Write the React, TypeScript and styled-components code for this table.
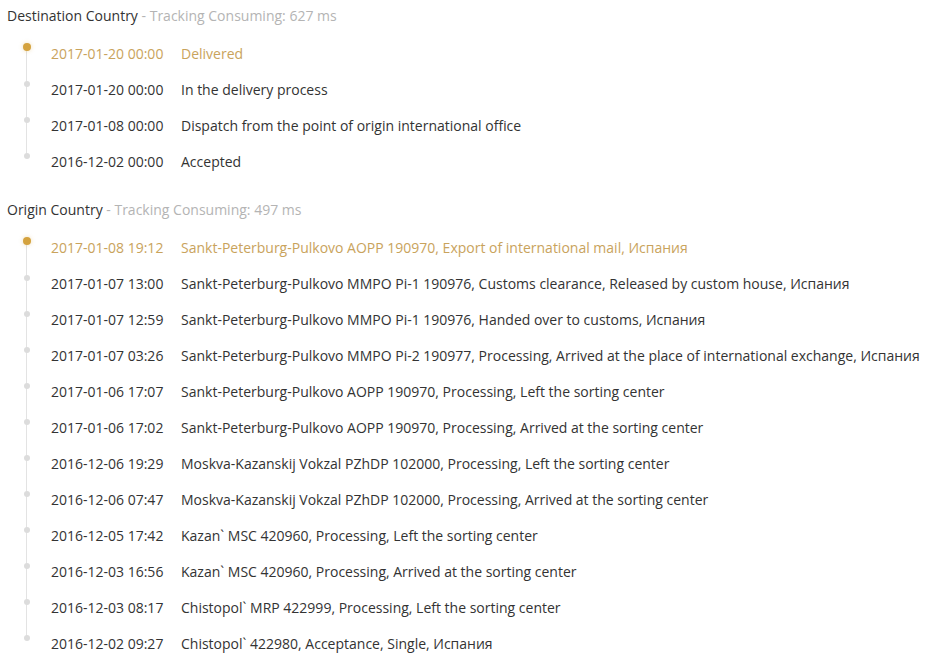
import React, {FC} from 'react';
import styled, {createGlobalStyle} from 'styled-components';

const GlobalStyle = createGlobalStyle`
  *, *:before, *:after {
    box-sizing: border-box;
  }
  body {
    margin: 0;
    background: #ffffff;
    font-family: "Open Sans", "Liberation Sans", sans-serif;
    font-size: 14px;
    color: #333333;
  }
`;

const Page = styled.div`
  padding: 6px 0 0 7px;
  display: flex;
  flex-direction: column;
  gap: 21px;
`;

const Section = styled.section`
  display: flex;
  flex-direction: column;
  gap: 9px;
`;

const Heading = styled.div`
  height: 20px;
  line-height: 20px;
  color: #333333;

  span {
    color: #b4b4b4;
  }
`;

const Timeline = styled.ul`
  list-style: none;
  margin: 0;
  padding: 0;
`;

const Item = styled.li<{ $active?: boolean; $last?: boolean }>`
  position: relative;
  display: flex;
  align-items: center;
  height: 36px;
  padding-left: 44px;
  color: ${p => (p.$active ? '#c9a35c' : '#333333')};
  white-space: nowrap;

  &::before {
    content: '';
    display: ${p => (p.$last ? 'none' : 'block')};
    position: absolute;
    left: 19px;
    top: 13px;
    width: 1px;
    height: 36px;
    background: #e3e3e3;
  }
`;

const Dot = styled.span<{ $active?: boolean }>`
  position: absolute;
  left: ${p => (p.$active ? '16px' : '17px')};
  top: ${p => (p.$active ? '8px' : '10px')};
  width: ${p => (p.$active ? '8px' : '6px')};
  height: ${p => (p.$active ? '8px' : '6px')};
  border-radius: 50%;
  background: ${p => (p.$active ? '#d4a23e' : '#dcdcdc')};
  box-shadow: ${p => (p.$active ? '0 0 4px rgba(212,162,62,0.35)' : 'none')};
`;

const Time = styled.span`
  width: 130px;
  flex-shrink: 0;
`;

const Text = styled.span``;

type Event = { time: string; text: string };

const destination: Event[] = [
  {time: '2017-01-20 00:00', text: 'Delivered'},
  {time: '2017-01-20 00:00', text: 'In the delivery process'},
  {time: '2017-01-08 00:00', text: 'Dispatch from the point of origin international office'},
  {time: '2016-12-02 00:00', text: 'Accepted'},
];

const origin: Event[] = [
  {time: '2017-01-08 19:12', text: 'Sankt-Peterburg-Pulkovo AOPP 190970, Export of international mail, Испания'},
  {time: '2017-01-07 13:00', text: 'Sankt-Peterburg-Pulkovo MMPO Pi-1 190976, Customs clearance, Released by custom house, Испания'},
  {time: '2017-01-07 12:59', text: 'Sankt-Peterburg-Pulkovo MMPO Pi-1 190976, Handed over to customs, Испания'},
  {time: '2017-01-07 03:26', text: 'Sankt-Peterburg-Pulkovo MMPO Pi-2 190977, Processing, Arrived at the place of international exchange, Испания'},
  {time: '2017-01-06 17:07', text: 'Sankt-Peterburg-Pulkovo AOPP 190970, Processing, Left the sorting center'},
  {time: '2017-01-06 17:02', text: 'Sankt-Peterburg-Pulkovo AOPP 190970, Processing, Arrived at the sorting center'},
  {time: '2016-12-06 19:29', text: 'Moskva-Kazanskij Vokzal PZhDP 102000, Processing, Left the sorting center'},
  {time: '2016-12-06 07:47', text: 'Moskva-Kazanskij Vokzal PZhDP 102000, Processing, Arrived at the sorting center'},
  {time: '2016-12-05 17:42', text: 'Kazan` MSC 420960, Processing, Left the sorting center'},
  {time: '2016-12-03 16:56', text: 'Kazan` MSC 420960, Processing, Arrived at the sorting center'},
  {time: '2016-12-03 08:17', text: 'Chistopol` MRP 422999, Processing, Left the sorting center'},
  {time: '2016-12-02 09:27', text: 'Chistopol` 422980, Acceptance, Single, Испания'},
];

const Tracking: FC<{ title: string; ms: number; events: Event[] }> = ({title, ms, events}) => (
  <Section>
    <Heading>
      {title} <span>- Tracking Consuming: {ms} ms</span>
    </Heading>
    <Timeline>
      {events.map((e, i) => (
        <Item key={i} $active={i === 0} $last={i === events.length - 1}>
          <Dot $active={i === 0}/>
          <Time>{e.time}</Time>
          <Text>{e.text}</Text>
        </Item>
      ))}
    </Timeline>
  </Section>
);

const App: FC = () => {
  return (
    <>
      <GlobalStyle/>
      <Page>
        <Tracking title="Destination Country" ms={627} events={destination}/>
        <Tracking title="Origin Country" ms={497} events={origin}/>
      </Page>
    </>
  );
};

export default App;
